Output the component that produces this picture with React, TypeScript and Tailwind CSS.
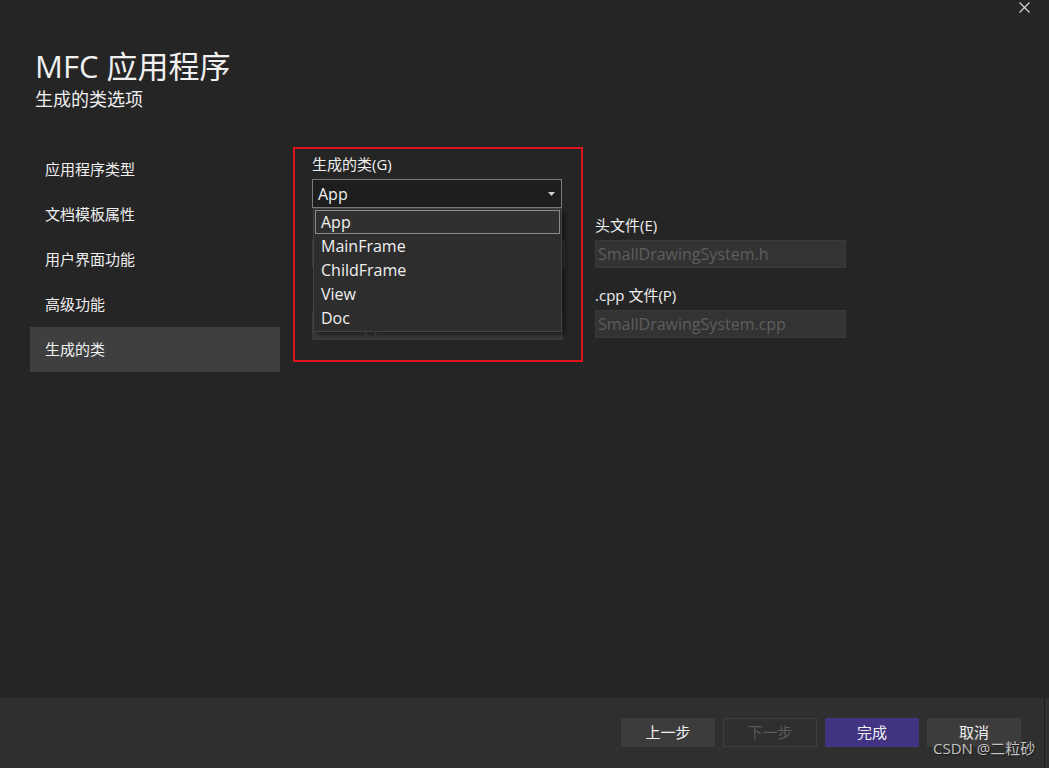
import React from "react";

const FONT = { fontFamily: '"Open Sans", "Noto Sans CJK SC", sans-serif' };

const NAV = ["应用程序类型", "文档模板属性", "用户界面功能", "高级功能", "生成的类"];
const CLASSES = ["App", "MainFrame", "ChildFrame", "View", "Doc"];

function Field({ value, className = "" }: { value: string; className?: string }) {
  return (
    <div className={`h-[28px] w-[251px] border border-[#3a3a3a] bg-[#333333] px-[2px] text-[16px] leading-[26px] text-[#5e5e5e] ${className}`}>
      {value}
    </div>
  );
}

export default function App() {
  return (
    <div className="relative flex h-[768px] w-[1049px] flex-col overflow-hidden bg-[#252525] text-[#f0f0f0]" style={FONT}>
      {/* close */}
      <svg className="absolute right-[19px] top-[2px]" width="11" height="11" viewBox="0 0 11 11">
        <path d="M0.5 0.5 L10.5 10.5 M10.5 0.5 L0.5 10.5" stroke="#d8d8d8" strokeWidth="1.1" />
      </svg>

      <div className="pl-[35px] pt-[47px]">
        <div className="text-[31px] leading-[38px]">MFC 应用程序</div>
        <div className="mt-[2px] text-[18px] leading-[24px]">生成的类选项</div>
      </div>

      <div className="mt-[36px] flex flex-1">
        {/* sidebar */}
        <div className="ml-[30px] flex w-[250px] flex-col">
          {NAV.map((n, i) => (
            <div
              key={n}
              className={`h-[45px] pl-[15px] text-[15px] leading-[45px] ${i === NAV.length - 1 ? "bg-[#3f3f3f]" : ""}`}
            >
              {n}
            </div>
          ))}
        </div>

        {/* generated classes (annotated) */}
        <div className="ml-[13px] h-[215px] w-[290px] border-2 border-[#e0141c] pl-[17px] pr-[18px] pt-[5px]">
          <div className="relative">
            <div className="text-[15px] leading-[20px]">生成的类(G)</div>
            <div className="mt-[5px] flex h-[29px] w-[250px] items-center justify-between border border-[#7a7a7a] bg-[#1e1e1e] pl-[5px] pr-[6px]">
              <span className="text-[16px]">App</span>
              <svg width="7" height="4" viewBox="0 0 7 4">
                <path d="M0 0 H7 L3.5 4 Z" fill="#cfcfcf" />
              </svg>
            </div>

            {/* fields hidden behind the open dropdown */}
            <Field value="CSmallDrawingSystemApp" className="mt-[32px] w-[253px]" />
            <Field value="CWinAppEx" className="mt-[43px] h-[29px] w-[250px] bg-[#393939]" />

            {/* open dropdown */}
            <div className="absolute left-[1px] top-[54px] w-[249px] border border-[#434343] bg-[#2d2d2d] pb-[1px] pt-[1px] shadow-[3px_3px_4px_rgba(0,0,0,0.45)]">
              {CLASSES.map((c, i) => (
                <div
                  key={c}
                  className={`mx-[1px] h-[24px] pl-[5px] text-[16px] leading-[22px] ${
                    i === 0 ? "border border-[#8a8a8a] bg-[#303030]" : "border border-transparent"
                  }`}
                >
                  {c}
                </div>
              ))}
            </div>
          </div>
        </div>

        {/* file names */}
        <div className="ml-[12px] flex flex-col pt-[68px]">
          <div className="text-[15px] leading-[20px]">头文件(E)</div>
          <Field value="SmallDrawingSystem.h" className="mt-[5px]" />
          <div className="mt-[17px] text-[15px] leading-[20px]">.cpp 文件(P)</div>
          <Field value="SmallDrawingSystem.cpp" className="mt-[5px]" />
        </div>
      </div>

      {/* footer */}
      <div className="relative flex h-[70px] justify-end gap-[8px] bg-[#2f2f2f] pr-[28px] pt-[20px]">
        <button className="h-[29px] w-[94px] bg-[#3c3c3c] text-[15px] text-[#f0f0f0]">上一步</button>
        <button className="h-[29px] w-[94px] border border-[#3e3e3e] text-[15px] text-[#5a5a5a]">下一步</button>
        <button className="h-[29px] w-[94px] bg-[#433483] text-[15px] text-[#f0f0f0]">完成</button>
        <button className="h-[29px] w-[94px] bg-[#3c3c3c] text-[15px] text-[#f0f0f0]">取消</button>
        <div className="absolute right-[4px] top-0 h-full w-[1px] bg-[#1c1c1c]" />
        <div
          className="absolute left-[933px] top-[41px] text-[15px] leading-[18px] text-[#c4c4c4]"
          style={{ textShadow: "1px 1px 1px #1a1a1a" }}
        >
          CSDN @二粒砂
        </div>
      </div>
    </div>
  );
}
